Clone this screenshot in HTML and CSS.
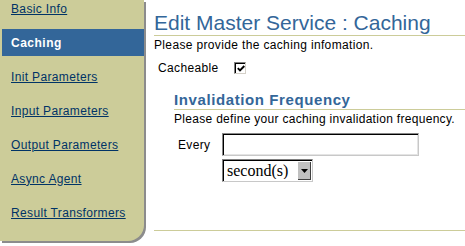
FILE: index.html
```html
<!DOCTYPE html>
<html>
<head>
<meta charset="utf-8">
<title>Edit Master Service : Caching</title>
<link rel="stylesheet" href="styles.css">
</head>
<body>
<div class="page">
  <nav class="sidebar">
    <ul class="nav">
      <li><a href="#">Basic Info</a></li>
      <li class="active"><span>Caching</span></li>
      <li><a href="#">Init Parameters</a></li>
      <li><a href="#">Input Parameters</a></li>
      <li><a href="#">Output Parameters</a></li>
      <li><a href="#">Async Agent</a></li>
      <li><a href="#">Result Transformers</a></li>
    </ul>
  </nav>
  <main class="main">
    <h1 class="title">Edit Master Service : Caching</h1>
    <p class="intro">Please provide the caching infomation.</p>
    <div class="cache-row">
      <span class="label">Cacheable</span>
      <span class="checkbox"><svg width="8" height="7" viewBox="0 0 8 7"><polyline points="0.8,3.2 3,5.5 7.3,1" fill="none" stroke="#000" stroke-width="1.9"/></svg></span>
    </div>
    <section class="freq">
      <h2 class="freq-title">Invalidation Frequency</h2>
      <p class="desc">Please define your caching invalidation frequency.</p>
      <div class="every-row">
        <label class="every-label">Every</label>
        <input class="every-input" type="text">
      </div>
      <div class="unit-row">
        <div class="select">
          <select class="select-el"><option>second(s)</option></select>
          <span class="select-btn"><svg width="7" height="4" viewBox="0 0 7 4"><polygon points="0,0 7,0 3.5,4" fill="#000"/></svg></span>
        </div>
      </div>
    </section>
    <div class="bottom-rule"></div>
  </main>
</div>
</body>
</html>
```

FILE: styles.css
```css
html, body {
  margin: 0;
  background: #ffffff;
}
body {
  font-family: "Liberation Sans", Arial, sans-serif;
  font-size: 12px;
  color: #000000;
}
.page {
  display: flex;
  align-items: flex-start;
  height: 246px;
  overflow: hidden;
}
.sidebar {
  flex: none;
  width: 144px;
  height: 241px;
  background: #cccc99;
  border-bottom-right-radius: 16px;
  box-shadow: 2px 2px 0 #8c8c8c;
  overflow: hidden;
}
.nav {
  list-style: none;
  margin: -5px 0 0;
  padding: 0;
}
.nav li {
  height: 27px;
  margin: 0 0 7px 2px;
  padding-left: 9px;
  display: flex;
  align-items: center;
  line-height: 14px;
  letter-spacing: 0.35px;
}
.nav a {
  color: #003366;
  text-decoration: underline;
  text-underline-offset: 1px;
}
.nav li.active {
  background: #336699;
  color: #ffffff;
  font-weight: bold;
  letter-spacing: 0.5px;
}
.main {
  flex: 1;
  min-width: 0;
  margin-left: 10px;
}
.title {
  margin: 0;
  padding-top: 11px;
  font-size: 21px;
  font-weight: normal;
  line-height: 24px;
  color: #336699;
  border-bottom: 1px solid #cccc99;
}
.intro {
  margin: 2px 0 0;
  line-height: 14px;
  letter-spacing: 0.35px;
}
.cache-row {
  display: flex;
  align-items: center;
  height: 16px;
  margin-top: 8px;
  padding-left: 4px;
  line-height: 14px;
  letter-spacing: 0.35px;
}
.cache-row .label {
  width: 76px;
}
.checkbox {
  box-sizing: border-box;
  width: 12px;
  height: 12px;
  border: 1px solid;
  border-color: #808080 #d4d0c8 #d4d0c8 #808080;
  box-shadow: inset 1px 1px 0 #000000;
  background: #ffffff;
  display: flex;
  align-items: center;
  justify-content: center;
  padding: 1px 0 0 1px;
}
.checkbox svg {
  display: block;
}
.freq {
  margin: 15px 0 0 20px;
}
.freq-title {
  margin: 0;
  padding-bottom: 1px;
  font-size: 15px;
  font-weight: bold;
  line-height: 17px;
  letter-spacing: 0.6px;
  color: #336699;
  border-bottom: 1px solid #cccc99;
}
.desc {
  margin: 2px 0 0;
  line-height: 14px;
  letter-spacing: 0.3px;
}
.every-row {
  display: flex;
  align-items: center;
  margin-top: 7px;
  padding-left: 4px;
  line-height: 14px;
  letter-spacing: 0.35px;
}
.every-label {
  width: 44px;
}
.every-input {
  box-sizing: border-box;
  width: 197px;
  height: 23px;
  margin: 0;
  padding: 0 3px;
  border: 1px solid;
  border-color: #888888 #c8c8c8 #c8c8c8 #888888;
  box-shadow: inset 1px 1px 0 #000000, inset -1px -1px 0 #e4e4e4;
  background: #ffffff;
  font-family: "Liberation Serif", "Times New Roman", serif;
  font-size: 16px;
  outline: none;
}
.unit-row {
  display: flex;
  margin-top: 3px;
  padding-left: 48px;
}
.select {
  box-sizing: border-box;
  display: flex;
  width: 91px;
  height: 23px;
  border: 1px solid;
  border-color: #808080 #c8c8c8 #c8c8c8 #808080;
  box-shadow: inset 1px 1px 0 #000000;
  background: #ffffff;
}
.select-el {
  appearance: none;
  -webkit-appearance: none;
  flex: 1;
  min-width: 0;
  height: 100%;
  margin: 0;
  padding: 0 0 0 4px;
  border: 0;
  background: transparent;
  font-family: "Liberation Serif", "Times New Roman", serif;
  font-size: 16px;
  color: #000000;
  outline: none;
}
.select-btn {
  flex: none;
  align-self: flex-start;
  box-sizing: border-box;
  width: 14px;
  height: 19px;
  margin: 1px 1px 0 0;
  background: #c0c0c0;
  box-shadow: inset 1px 1px 0 #ffffff, inset -1px -1px 0 #404040;
  display: flex;
  align-items: center;
  justify-content: center;
}
.select-btn svg {
  display: block;
}
.bottom-rule {
  margin-top: 48px;
  border-top: 1px solid #cccc99;
}
```
